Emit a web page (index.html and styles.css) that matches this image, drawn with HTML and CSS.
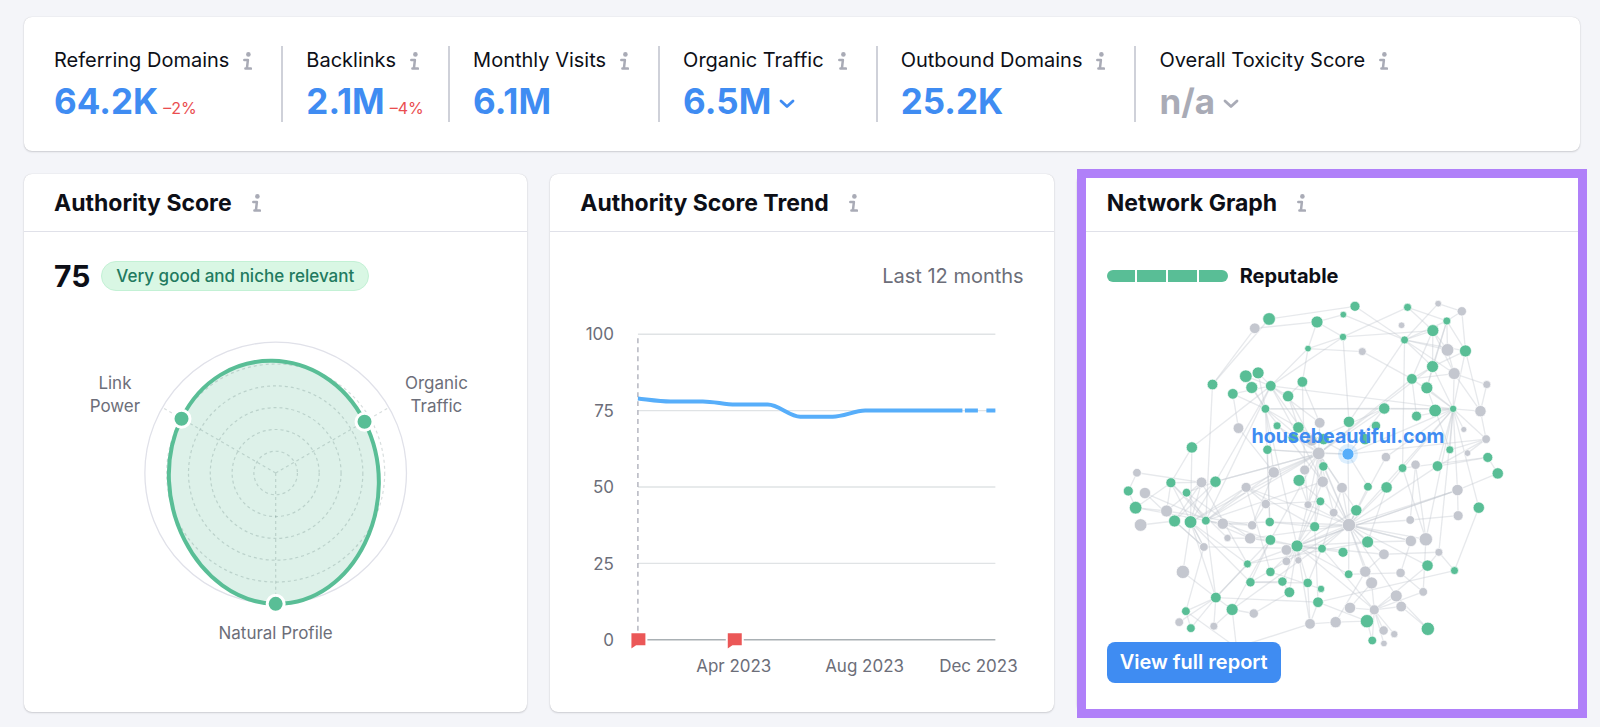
FILE: index.html
```html
<!DOCTYPE html>
<html lang="en">
<head>
<meta charset="utf-8">
<meta name="viewport" content="width=device-width, initial-scale=1">
<title>Domain Overview</title>
<link rel="stylesheet" href="styles.css">
</head>
<body>
<svg class="sprite" aria-hidden="true">
  <symbol id="icon-info" viewBox="0 0 9 18">
    <circle cx="5.4" cy="2.4" r="2.3" fill="currentColor"/>
    <path d="M1.3 7.9H4.9L3.9 16.6M2.4 16.6H8" fill="none" stroke="currentColor" stroke-width="2.5" stroke-linecap="round" stroke-linejoin="round"/>
  </symbol>
  <symbol id="icon-chevron" viewBox="0 0 16 10">
    <path d="M2 2L8 7.6L14 2" fill="none" stroke="currentColor" stroke-width="2.8" stroke-linecap="round" stroke-linejoin="round"/>
  </symbol>
</svg>
<main class="page">
  <section class="card metrics" aria-label="Key metrics">
    <div class="metric">
      <div class="metric-label">Referring Domains<button class="info" aria-label="About Referring Domains"><svg><use href="#icon-info"/></svg></button></div>
      <div class="metric-value"><a href="#domains">64.2K</a><span class="delta">–2%</span></div>
    </div>
    <div class="metric">
      <div class="metric-label">Backlinks<button class="info" aria-label="About Backlinks"><svg><use href="#icon-info"/></svg></button></div>
      <div class="metric-value"><a href="#backlinks">2.1M</a><span class="delta">–4%</span></div>
    </div>
    <div class="metric">
      <div class="metric-label">Monthly Visits<button class="info" aria-label="About Monthly Visits"><svg><use href="#icon-info"/></svg></button></div>
      <div class="metric-value"><a href="#visits">6.1M</a></div>
    </div>
    <div class="metric">
      <div class="metric-label">Organic Traffic<button class="info" aria-label="About Organic Traffic"><svg><use href="#icon-info"/></svg></button></div>
      <div class="metric-value"><button class="picker">6.5M<svg><use href="#icon-chevron"/></svg></button></div>
    </div>
    <div class="metric">
      <div class="metric-label">Outbound Domains<button class="info" aria-label="About Outbound Domains"><svg><use href="#icon-info"/></svg></button></div>
      <div class="metric-value"><a href="#outbound">25.2K</a></div>
    </div>
    <div class="metric">
      <div class="metric-label">Overall Toxicity Score<button class="info" aria-label="About Overall Toxicity Score"><svg><use href="#icon-info"/></svg></button></div>
      <div class="metric-value"><button class="picker picker-muted">n/a<svg><use href="#icon-chevron"/></svg></button></div>
    </div>
  </section>

  <div class="panels">
    <section class="card panel">
      <header class="panel-head">
        <h2>Authority Score</h2>
        <button class="info info-head" aria-label="About Authority Score"><svg><use href="#icon-info"/></svg></button>
      </header>
      <div class="panel-body">
        <div class="summary"><strong class="score">75</strong><span class="pill">Very good and niche relevant</span></div>
        <svg class="figure radar" viewBox="-222 -182 444 392" role="img" aria-label="Authority Score factors">
          <path class="radar-area" d="M-94.3-54.4C-55.9-133 48.4-131.3 89-51.4C129.6 28.5 79 132.3 0 131C-79 129.7-132.7 24.2-94.3-54.4Z"/>
          <circle class="radar-rim" r="131"/>
          <g class="radar-grid">
            <circle r="21.8"/><circle r="43.6"/><circle r="65.5"/><circle r="87.3"/><circle r="109.2"/>
            <path d="M0 0L-113.4-65.5M0 0L113.4-65.5M0 0V131"/>
          </g>
          <path class="radar-line" d="M-94.3-54.4C-55.9-133 48.4-131.3 89-51.4C129.6 28.5 79 132.3 0 131C-79 129.7-132.7 24.2-94.3-54.4Z"/>
          <g class="radar-dots">
            <circle cx="-94.3" cy="-54.4" r="8.5"/><circle cx="89" cy="-51.4" r="8.5"/><circle cx="0" cy="131" r="8.5"/>
          </g>
          <g class="axis-text middle">
            <text x="-161" y="-84">Link</text><text x="-161" y="-61">Power</text>
            <text x="161" y="-84">Organic</text><text x="161" y="-61">Traffic</text>
            <text x="0" y="166">Natural Profile</text>
          </g>
        </svg>
      </div>
    </section>

    <section class="card panel">
      <header class="panel-head">
        <h2>Authority Score Trend</h2>
        <button class="info info-head" aria-label="About Authority Score Trend"><svg><use href="#icon-info"/></svg></button>
      </header>
      <div class="panel-body">
        <div class="summary summary-end">Last 12 months</div>
        <svg class="figure" viewBox="0 0 444 392" role="img" aria-label="Authority Score over the last 12 months">
          <path class="gridline" d="M58 43H416M58 119.5H416M58 196H416M58 272.5H416"/>
          <path class="baseline" d="M58 349H416"/>
          <path class="cursor" d="M58 47V342"/>
          <path class="trend" d="M58 107.3C69 108.5 80 110.3 90.5 110.3H123C134 110.3 145 113.4 155.6 113.4H188C199 113.4 210 125.6 220.6 125.6H253C264 125.6 275 119.5 285.6 119.5H383"/>
          <path class="trend" d="M385.500 119.500H398.500M407 119.500H416"/>
          <path class="flag" d="M50.500 341.500H66.500V355.500H56.500L50.500 359.500Z"/>
          <path class="flag" d="M147 341.500H163V355.500H153L147 359.500Z"/>
          <g class="axis-text end">
            <text x="34" y="49">100</text><text x="34" y="126">75</text><text x="34" y="202">50</text><text x="34" y="279">25</text><text x="34" y="355">0</text>
          </g>
          <g class="axis-text middle">
            <text x="154" y="381">Apr 2023</text><text x="285" y="381">Aug 2023</text><text x="399" y="381">Dec 2023</text>
          </g>
        </svg>
      </div>
    </section>

    <section class="card panel highlighted">
      <header class="panel-head">
        <h2>Network Graph</h2>
        <button class="info info-head" aria-label="About Network Graph"><svg><use href="#icon-info"/></svg></button>
      </header>
      <div class="panel-body">
        <div class="summary">
          <div class="meter" role="img" aria-label="4 of 4"><span></span><span></span><span></span><span></span></div>
          <strong class="rating">Reputable</strong>
        </div>
        <div class="network">
          <svg class="figure" id="network" viewBox="21 3 1332 1176" preserveAspectRatio="xMinYMin" role="img" aria-label="Backlink network of housebeautiful.com">
            <g id="edges"></g>
            <g id="nodes"></g>
            <text class="domain" x="745" y="459">housebeautiful.com</text>
          </svg>
          <button class="report">View full report</button>
        </div>
      </div>
    </section>
  </div>
</main>
<script src="network.js"></script>
</body>
</html>
```
FILE: styles.css
```css
* { box-sizing: border-box; }

body {
  margin: 0;
  background: #f4f5f9;
  color: #0d0f17;
  font-family: Inter, "Liberation Sans", sans-serif;
  font-size: 20px;
}

button {
  font: inherit;
  color: inherit;
  background: none;
  border: 0;
  padding: 0;
  cursor: pointer;
}

a { color: inherit; text-decoration: none; }

.sprite { position: absolute; width: 0; height: 0; }

.page {
  display: flex;
  flex-direction: column;
  gap: 23px;
  padding: 17px 20px 15px 24px;
}

.card {
  background: #fff;
  border-radius: 8px;
  box-shadow: 0 0 1px rgba(25, 27, 35, 0.2), 0 1px 2px rgba(25, 27, 35, 0.16);
}

.metrics { display: flex; padding: 29px 30px; }

.metric {
  padding: 2px 24px 1px 23px;
  border-right: 2px solid #cfd1d9;
}
.metric:first-child { padding-left: 0; }
.metric:last-child { border-right: 0; }

.metric-label {
  display: flex;
  align-items: center;
  line-height: 25px;
  white-space: nowrap;
}

.metric-value {
  display: flex;
  align-items: baseline;
  gap: 5px;
  height: 40px;
  margin-top: 8px;
  line-height: 40px;
  font-size: 35px;
  font-weight: 700;
  color: #3f8cf2;
}

.delta { font-size: 16px; line-height: 20px; font-weight: 400; color: #ea4d4f; }

.picker { display: flex; align-items: center; gap: 8px; line-height: 40px; }
.picker svg { width: 16px; height: 10px; margin-top: 6px; }
.picker-muted { color: #a9abb6; }

.info { display: flex; margin: 0 5px 0 14px; color: #a9abb6; }
.info svg { width: 9px; height: 18px; }
.info-head { margin-left: 20px; }

.panels {
  display: grid;
  grid-template-columns: repeat(3, minmax(0, 1fr));
  gap: 23px;
}

.panel-head {
  display: flex;
  align-items: center;
  height: 58px;
  padding: 0 30px;
  border-bottom: 1px solid #e0e1e9;
}
.panel-head h2 { margin: 0; font-size: 23px; line-height: 32px; font-weight: 700; }

.panel-body { padding: 29px 30px; }

.summary { display: flex; align-items: center; height: 30px; }
.summary-end { justify-content: flex-end; color: #6c6e79; }

.score { font-size: 30px; font-weight: 700; }

.pill {
  margin-left: 11px;
  padding: 0 14px;
  border: 1px solid #c3f1d5;
  border-radius: 15px;
  background: #d9f7e4;
  color: #227a5f;
  font-size: 17px;
  font-weight: 500;
  line-height: 28px;
}

.figure { display: block; width: 100%; height: 392px; }

.axis-text { font-size: 17px; fill: #6c6e79; }
.middle { text-anchor: middle; }
.end { text-anchor: end; }

.radar-area { fill: #ddf1e9; }
.radar-rim { fill: none; stroke: #e0e1e9; stroke-width: 1.3; }
.radar-grid { fill: none; stroke: rgba(25, 60, 60, 0.17); stroke-width: 1.2; stroke-dasharray: 3 3; }
.radar-line { fill: none; stroke: #59be96; stroke-width: 4; }
.radar-dots { fill: #59be96; stroke: #fff; stroke-width: 3; }

.gridline { stroke: #e0e3e5; stroke-width: 1.4; }
.baseline { stroke: #a9b0b4; stroke-width: 1.6; }
.cursor { stroke: #a9abb6; stroke-width: 1.3; stroke-dasharray: 5 4; }
.trend { fill: none; stroke: #57aefa; stroke-width: 4; }
.flag { fill: #eb5757; stroke: #fff; stroke-width: 2; }

.highlighted { position: relative; }
.highlighted::after {
  content: "";
  position: absolute;
  inset: -5px -7px -6px 0;
  border: 9px solid #b080f9;
  pointer-events: none;
}

.meter { display: flex; gap: 2px; width: 121px; height: 12px; border-radius: 6px; overflow: hidden; }
.meter span { flex: 1; background: #59be96; }
.rating { margin-left: 12px; font-weight: 700; }

.network { position: relative; }
.edge { stroke: #c4c7cf; stroke-opacity: 0.4; stroke-width: 4; }
.node { stroke: #fff; stroke-width: 2; }
.node-g { fill: #59be96; }
.node-n { fill: #c4c7cf; }
.node-b { fill: #57aefa; }
.halo { fill: #57aefa; fill-opacity: 0.2; }
.domain { font-size: 59px; font-weight: 700; text-anchor: middle; fill: #3f8cf2; }

.report {
  position: absolute;
  left: 0;
  bottom: 0;
  padding: 0 13px;
  border-radius: 8px;
  background: #3f8cf2;
  color: #fff;
  font-weight: 600;
  line-height: 41px;
  white-space: nowrap;
}
```
FILE: network.js
```js
// Each node: x, y, radius, kind (g = relevant, n = neutral, b = analysed domain)
const nodes = `508,87,18,g 465,115,15,n 652,96,17,g 625,176,9,g 338,284,15,g 438,259,18,g 475,249,17,g 456,293,17,g 513,288,15,g 608,276,15,g
399,312,15,g 565,319,16,g 497,357,12,g 416,415,15,n 532,408,11,g 596,413,16,g 276,473,16,g 503,480,13,g 111,549,12,n 522,548,16,n
615,541,14,n 766,49,14,g 731,74,9,g 730,141,10,g 788,185,11,n 924,52,11,g 1016,41,9,n 1087,64,13,n 906,106,9,n 1042,93,11,g
1000,122,17,g 915,150,11,g 1044,180,18,n 1098,183,17,g 999,230,17,g 1064,251,17,n 937,267,15,g 982,294,17,g 1162,284,11,n 854,356,16,g
951,379,14,g 1007,362,18,g 1061,357,10,g 1143,364,16,n 660,399,15,n 748,396,16,g 829,408,13,g 1093,419,8,n 1160,448,12,n 672,448,16,g
636,452,16,n 796,448,16,g 657,491,18,n 745,493,17,b 859,502,13,n 1051,480,11,g 1104,490,9,n 1165,503,14,g 671,530,13,g 948,525,13,n
909,535,12,g 1014,529,15,g 1195,551,16,g 580,443,14,g 85,604,14,g 135,610,16,n 213,579,14,g 305,578,15,n 347,576,16,g 260,609,12,g
107,654,18,g 439,593,14,n 598,572,17,g 200,664,17,n 122,706,18,n 224,694,17,g 272,697,18,g 318,693,12,g 369,702,16,n 457,707,13,n
510,697,13,g 498,643,13,n 383,745,10,n 451,746,16,n 512,751,15,g 312,772,12,n 249,847,19,n 443,823,11,g 512,847,13,g 452,878,13,g
548,876,13,g 569,908,15,g 560,781,15,n 592,769,17,g 560,815,12,n 596,812,10,n 348,924,15,g 397,960,17,g 258,965,12,g 238,998,12,n
273,1016,12,g 342,1010,11,n 462,972,13,n 631,1003,15,n 625,645,11,n 669,576,16,n 727,594,15,n 805,591,12,g 861,593,16,g 662,635,12,g
702,669,12,n 770,662,16,g 645,711,14,g 748,706,19,n 932,691,12,n 804,757,17,g 934,754,16,n 979,749,19,n 853,794,15,n 667,777,12,g
730,788,14,g 747,854,12,g 797,846,16,n 816,880,17,n 903,850,13,n 1018,788,11,n 984,828,16,g 1065,843,11,g 971,907,12,n 890,919,17,n
905,951,15,n 751,955,16,n 824,961,14,n 802,995,19,g 708,998,16,n 624,880,13,g 664,898,10,g 655,938,15,g 985,1018,19,g 852,1023,13,n
884,1034,10,n 853,1062,9,n 818,1053,12,g 1074,601,16,n 1076,678,14,n 1138,654,16,g 410,1074,12,n`
  .split(/\s+/)
  .map((item) => item.split(","));

// Links grouped by source node: "source:target,target,..."
const links = `0:21,4 1:2,4 2:3,23,22 3:23,24,9,8 8:23,5,6,10,11,16,44,52,42,105,68,77 22:31 21:31
23:25,30,45 25:29,30 26:27,31 27:29,33 29:31,33,34,37,32 30:31,34,36,32,35 31:32,33,34,35,45,60
32:35 33:34,43,42 34:36,37,42 35:38,43,36,42 36:40,42,52 37:42,55 24:36 38:43 39:42,52,53,50
43:48,42 9:44,20,11 10:12,13 7:12 6:12 5:12 12:39,15,52,80,19,105,42 13:19 14:52 11:52,15 4:77
16:66,76 18:64,67 52:19,71,68,77,76,105,20,106,58,44,34,84,112,104,110,111,53 17:52,53,80 15:53
53:45,113,48,42,107 42:55,47,48,125,145,61,113,117,108,41,40,54 48:61,56 48:55 57:61,60 62:143,57
145:127 143:144,113,93,42 114:144,113,59 59:117 60:117 54:113
113:105,106,104,52,110,112,115,116,117,118,122,129,121,123,111,108,61,107,83,80,58,72,71,119,93,97,89,126
125:126,127,118 127:137 126:132 128:132,117,124 129:132,138 130:132,138 131:132,123
132:133,139,140,141,142,119,123,93 134:103,133,122 133:142,137 103:137,93,135,146
96:86,98,99,97,100,101,137,84,87,76,77 97:101,102,84,146 98:146,85,100 102:91 86:76 85:75,76,119,66
87:115,93 88:93,71 89:90,84 90:91,93 91:93 135:93,89 136:88 119:106,135 112:80,109,137
64:70 70:73,66,78 74:75 65:83,75 73:67,79 66:67,73,77 69:77,83,68 68:76,75,52 67:75,76,87
71:112,76 77:78,19,71,105 78:79,80,84 79:81,19 82:83,66 81:71,109 83:84,93 76:87,89 75:85
93:92,94,95,120,119,104,109,105,112,12,84,118,121,115,111,143 115:116,108 116:124,113 118:122 121:124 122:123 104:20,72,58`
  .split(/\s+/);

const svgNS = "http://www.w3.org/2000/svg";
const add = (parent, tag, attrs) => {
  const el = document.createElementNS(svgNS, tag);
  for (const key in attrs) el.setAttribute(key, attrs[key]);
  parent.appendChild(el);
};

const edgeLayer = document.getElementById("edges");
const nodeLayer = document.getElementById("nodes");

for (const group of links) {
  const [source, targets] = group.split(":");
  const [x1, y1] = nodes[source];
  for (const target of targets.split(",")) {
    const [x2, y2] = nodes[target];
    add(edgeLayer, "line", { class: "edge", x1, y1, x2, y2 });
  }
}

for (const [cx, cy, r, kind] of nodes) {
  if (kind === "b") add(nodeLayer, "circle", { class: "halo", cx, cy, r: 30 });
  add(nodeLayer, "circle", { class: `node node-${kind}`, cx, cy, r: Number(r) + 1 });
}
```
